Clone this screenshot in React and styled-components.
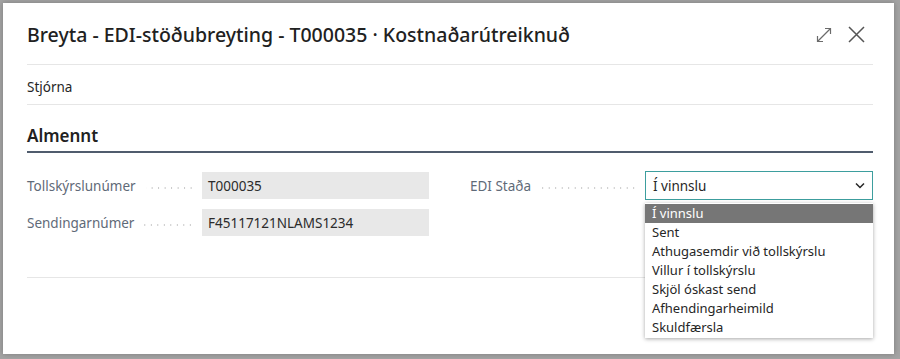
import React from "react";
import styled, { createGlobalStyle } from "styled-components";

const Global = createGlobalStyle`
  html, body { margin: 0; padding: 0; }
  body {
    width: 900px; height: 359px; overflow: hidden;
    background: #a4a4a4;
    font-family: "Noto Sans", "Open Sans", sans-serif;
  }
`;

const Dialog = styled.div`
  position: relative;
  margin: 3px 0 0 3px;
  width: 891px;
  height: 351px;
  background: #fff;
  box-shadow: 0 0 6px rgba(0,0,0,0.25);
  padding: 0 21px 0 24px;
  box-sizing: border-box;
  display: flex;
  flex-direction: column;
`;

const Header = styled.div`
  height: 62px;
  display: flex;
  align-items: center;
  justify-content: space-between;
  border-bottom: 1px solid #e6e6e6;
  box-sizing: border-box;
`;

const Title = styled.h1`
  margin: 0;
  font-size: 19.5px;
  font-weight: 500;
  color: #212121;
  padding-top: 2px;
`;

const Icons = styled.div`
  display: flex;
  align-items: center;
  gap: 15px;
  margin-right: 8px;
  padding-top: 2px;
`;

const IconBtn = styled.button`
  border: 0; background: none; padding: 0; margin: 0;
  display: flex; align-items: center; justify-content: center;
  width: ${p => p.$w}px; height: 18px;
`;

const ActionBar = styled.div`
  height: 40px;
  display: flex;
  align-items: center;
  border-bottom: 1px solid #e6e6e6;
  font-size: 13.5px;
  color: #262626;
  padding-top: 4px;
  box-sizing: border-box;
`;

const Section = styled.section`
  margin-top: 19px;
  padding-bottom: 41px;
  border-bottom: 1px solid #e6e6e6;
`;

const SectionTitle = styled.h2`
  margin: 0;
  font-size: 17px;
  font-weight: 600;
  color: #212121;
  padding-bottom: 4px;
  border-bottom: 2px solid #505c6d;
`;

const Grid = styled.div`
  display: grid;
  grid-template-columns: 402px 403px;
  column-gap: 41px;
  margin-top: 19px;
`;

const Column = styled.div`
  display: flex;
  flex-direction: column;
  gap: 10px;
`;

const Field = styled.div`
  position: relative;
  display: flex;
  align-items: center;
  height: 27px;
`;

const Label = styled.div`
  width: 175px;
  display: flex;
  align-items: center;
  font-size: 13.5px;
  color: #5f6a78;
  padding-right: 8px;
  box-sizing: border-box;
`;

const Leader = styled.span`
  flex: 1;
  height: 2px;
  margin: 4px 0 0 10px;
  background-image: radial-gradient(circle, #c4c4c4 0.7px, transparent 0.9px);
  background-size: 6.5px 2px;
  background-repeat: repeat-x;
  background-position: right center;
`;

const ReadOnly = styled.div`
  width: 227px;
  height: 27px;
  background: #e8e8e8;
  font-size: 13.5px;
  color: #2b2b2b;
  display: flex;
  align-items: center;
  padding-left: 6px;
  box-sizing: border-box;
`;

const Select = styled.div`
  width: 228px;
  height: 29px;
  border: 1px solid #3d9e9e;
  box-sizing: border-box;
  display: flex;
  align-items: center;
  justify-content: space-between;
  padding: 0 7px 0 7px;
  font-size: 13.5px;
  color: #262626;
`;

const Menu = styled.ul`
  position: absolute;
  top: 31px;
  left: 175px;
  width: 228px;
  margin: 0;
  padding: 1px 0;
  list-style: none;
  background: #fff;
  box-shadow: 0 1px 4px rgba(0,0,0,0.35);
  z-index: 5;
`;

const Item = styled.li`
  height: 19px;
  line-height: 19px;
  padding-left: 7px;
  font-size: 13px;
  color: ${p => (p.$active ? "#fff" : "#262626")};
  background: ${p => (p.$active ? "#767676" : "transparent")};
  white-space: nowrap;
`;

const ExpandIcon = () => (
  <svg width="18" height="18" viewBox="0 0 18 18" fill="none" stroke="#6b6b6b" strokeWidth="1.2">
    <path d="M2.5 15.5 L15.5 2.5" />
    <path d="M10 2.5 H15.5 V8" />
    <path d="M2.5 10 V15.5 H8" />
  </svg>
);

const CloseIcon = () => (
  <svg width="17" height="17" viewBox="0 0 17 17" fill="none" stroke="#555" strokeWidth="1.5">
    <path d="M1 1 L16 16 M16 1 L1 16" />
  </svg>
);

const Chevron = () => (
  <svg width="10" height="7" viewBox="0 0 10 7" fill="none" stroke="#262626" strokeWidth="1.5">
    <path d="M1 1.5 L5 5.5 L9 1.5" />
  </svg>
);

const options = [
  "Í vinnslu",
  "Sent",
  "Athugasemdir við tollskýrslu",
  "Villur í tollskýrslu",
  "Skjöl óskast send",
  "Afhendingarheimild",
  "Skuldfærsla",
];

export default function App() {
  return (
    <>
      <Global />
      <Dialog>
        <Header>
          <Title>Breyta - EDI-stöðubreyting - T000035 · Kostnaðarútreiknuð</Title>
          <Icons>
            <IconBtn $w={18}><ExpandIcon /></IconBtn>
            <IconBtn $w={17}><CloseIcon /></IconBtn>
          </Icons>
        </Header>
        <ActionBar>Stjórna</ActionBar>
        <Section>
          <SectionTitle>Almennt</SectionTitle>
          <Grid>
            <Column>
              <Field>
                <Label>Tollskýrslunúmer<Leader /></Label>
                <ReadOnly>T000035</ReadOnly>
              </Field>
              <Field>
                <Label>Sendingarnúmer<Leader /></Label>
                <ReadOnly>F45117121NLAMS1234</ReadOnly>
              </Field>
            </Column>
            <Column>
              <Field>
                <Label>EDI Staða<Leader /></Label>
                <Select>
                  <span>Í vinnslu</span>
                  <Chevron />
                </Select>
                <Menu>
                  {options.map((o, i) => (
                    <Item key={o} $active={i === 0}>{o}</Item>
                  ))}
                </Menu>
              </Field>
            </Column>
          </Grid>
        </Section>
      </Dialog>
    </>
  );
}
